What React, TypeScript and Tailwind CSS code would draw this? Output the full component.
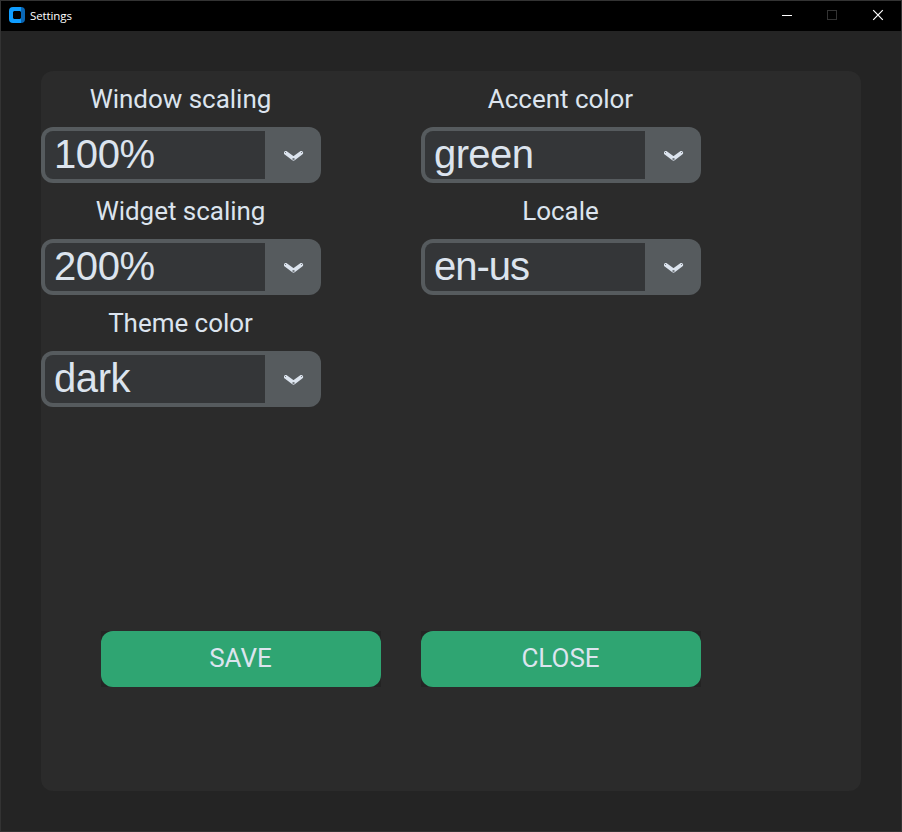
import React from "react";

function AppIcon() {
  return (
    <svg width="16" height="16" viewBox="0 0 16 16" className="relative -top-px shrink-0">
      <path d="M4 0H12V4H4V12H12V16H4Q0 16 0 12V4Q0 0 4 0Z" fill="#0f9dff" />
      <path d="M12 0Q16 0 16 4V12Q16 16 12 16V12V4Z" fill="#0a66b4" />
      <rect x="4" y="4" width="8" height="8" rx="1" fill="#000" />
      <path d="M4 4h1L4 5zM12 4v1l-1-1zM4 12v-1l1 1zM12 12h-1l1-1z" fill="#0f9dff" />
    </svg>
  );
}

function TitleBar() {
  return (
    <header className="flex h-[30px] items-center bg-black pl-2">
      <AppIcon />
      <span className="ml-[5px] font-['Open_Sans',sans-serif] text-[11.5px] leading-4 tracking-[-0.1px] text-white">Settings</span>
      <div className="ml-auto flex items-center text-white">
        <svg width="46" height="30" viewBox="0 0 46 30" shapeRendering="crispEdges">
          <rect x="18" y="14" width="10" height="1" fill="#fff" />
        </svg>
        <svg width="46" height="30" viewBox="0 0 46 30" shapeRendering="crispEdges">
          <rect x="17.5" y="9.5" width="9" height="9" fill="none" stroke="#333" />
        </svg>
        <svg width="45" height="30" viewBox="0 0 45 30">
          <path d="M17.2 9.2L26.8 18.8M26.8 9.2L17.2 18.8" fill="none" stroke="#fff" strokeWidth="1.2" />
        </svg>
      </div>
    </header>
  );
}

function Arrow() {
  return (
    <svg width="20" height="11" viewBox="0 0 20 11">
      <path d="M1.9 2L9.5 7.7L17.1 2" fill="none" stroke="#dce4ee" strokeWidth="4" strokeLinecap="round" strokeLinejoin="round" />
      <g fill="#565b5e" opacity="0.75">
        <rect x="1" y="1" width="1" height="1" />
        <rect x="17" y="1" width="1" height="1" />
        <rect x="8.5" y="7" width="2" height="2" />
      </g>
    </svg>
  );
}

function Field({ label, value, tracking = "tracking-[-0.4px]" }: { label: string; value: string; tracking?: string }) {
  return (
    <div className="w-[280px]">
      <div className="flex h-14 items-center justify-center pr-px text-[26px] leading-[30px] tracking-[-0.03px]">{label}</div>
      <div className="flex h-14 rounded-xl bg-[#565b5e] py-1 pl-1">
        <div className={`flex w-[220px] items-center rounded-l-lg bg-[#343638] pb-0.5 pl-[9px] font-['Liberation_Sans',Arial,sans-serif] text-[40px] leading-[46px] ${tracking}`}>
          {value}
        </div>
        <div className="flex flex-1 items-center justify-center pl-px pt-0.5">
          <Arrow />
        </div>
      </div>
    </div>
  );
}

function ActionButton({ label }: { label: string }) {
  return (
    <div className="w-[280px] bg-[#242424]">
      <button className="flex h-14 w-full items-center justify-center rounded-xl bg-[#2fa572] pb-0.5 pr-px text-[26px] leading-[30px]">
        {label}
      </button>
    </div>
  );
}

export default function App() {
  return (
    <div className="flex h-[832px] w-[902px] flex-col border border-[#333] bg-[#242424] font-['Roboto',sans-serif] text-[#dce4ee]">
      <TitleBar />
      <main className="m-10 flex h-[720px] w-[820px] flex-col rounded-xl bg-[#2b2b2b]">
        <div className="flex gap-[100px]">
          <div>
            <Field label="Window scaling" value="100%" />
            <Field label="Widget scaling" value="200%" />
            <Field label="Theme color" value="dark" />
          </div>
          <div>
            <Field label="Accent color" value="green" tracking="tracking-[-0.6px]" />
            <Field label="Locale" value="en-us" tracking="tracking-[-1px]" />
          </div>
        </div>
        <div className="mt-56 flex gap-10 pl-[60px]">
          <ActionButton label="SAVE" />
          <ActionButton label="CLOSE" />
        </div>
      </main>
    </div>
  );
}
